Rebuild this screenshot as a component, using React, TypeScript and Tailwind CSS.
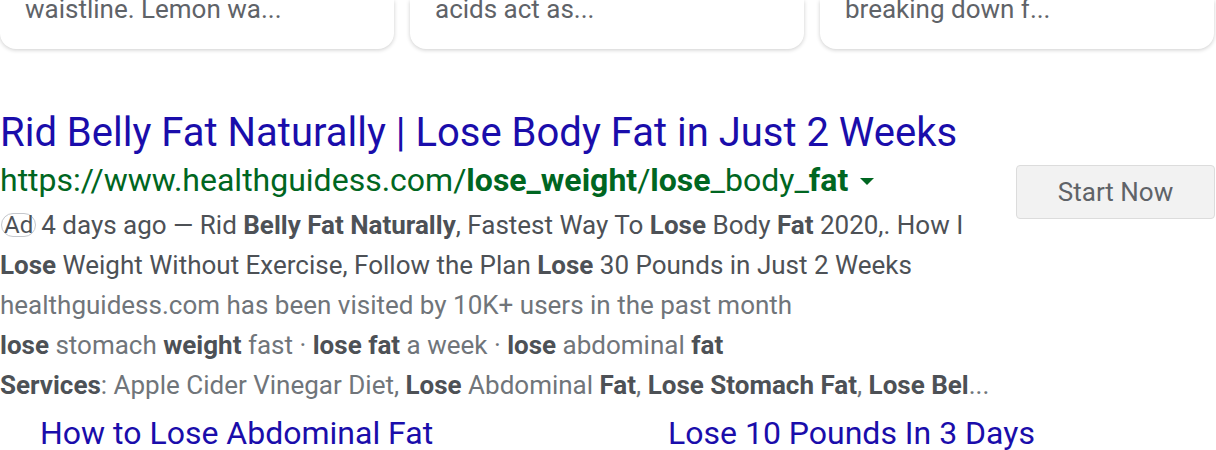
const Card = ({ text }: { text: string }) => (
  <div className="h-[49px] rounded-b-2xl bg-white shadow-[0_1px_4px_rgba(0,0,0,0.2)] flex items-end pb-[23px] overflow-hidden">
    <p className="px-[25px] text-[26px] leading-[34px] text-[#5f6368]">{text}</p>
  </div>
)

const B = ({ children }: { children: React.ReactNode }) => <b className="font-bold text-[#4d5156]">{children}</b>

export default function App() {
  return (
    <div className="w-[1216px] h-[450px] overflow-hidden bg-white font-['Roboto',sans-serif]">
      <div className="grid grid-cols-3 gap-4 pr-[2px]">
        <Card text="waistline. Lemon wa..." />
        <Card text="acids act as..." />
        <Card text="breaking down f..." />
      </div>

      <div className="flex mt-[60px]">
        <div className="flex-1">
          <a href="#" className="block text-[40px] leading-[48px] text-[#1a0dab]">
            Rid Belly Fat Naturally | Lose Body Fat in Just 2 Weeks
          </a>
          <div className="flex items-center mt-[3px] text-[32px] leading-[40px] text-[#006621]">
            <span>
              https://www.healthguidess.com/<b>lose_weight</b>/<b>lose</b>_body_<b>fat</b>
            </span>
            <span className="ml-[12px] mt-[2px] border-x-[7px] border-x-transparent border-t-[7px] border-t-[#006621]" />
          </div>
          <div className="mt-[5px] text-[26px] leading-[40px] text-[#4d5156]">
            <p>
              <span className="inline-block border border-[#c4c7cc] rounded-full px-[2px] text-[24px] leading-[22px] mr-[5px] ml-[1px] align-[1px]">Ad</span>
              4 days ago — Rid <B>Belly Fat Naturally</B>, Fastest Way To <B>Lose</B> Body <B>Fat</B> 2020,. How I
            </p>
            <p>
              <B>Lose</B> Weight Without Exercise, Follow the Plan <B>Lose</B> 30 Pounds in Just 2 Weeks
            </p>
            <p className="text-[#70757a]">healthguidess.com has been visited by 10K+ users in the past month</p>
            <p className="text-[#70757a]">
              <B>lose</B> stomach <B>weight</B> fast · <B>lose fat</B> a week · <B>lose</B> abdominal <B>fat</B>
            </p>
            <p className="text-[#70757a] whitespace-nowrap">
              <B>Services</B>: Apple Cider Vinegar Diet, <B>Lose</B> Abdominal <B>Fat</B>, <B>Lose Stomach Fat</B>, <B>Lose Bel</B>...
            </p>
          </div>
        </div>
        <div className="w-[200px] pt-[56px]">
          <button className="w-[199px] h-[54px] bg-[#f2f2f2] border border-[#dcdcdc] rounded-[4px] text-[26px] text-[#5f6368]">
            Start Now
          </button>
        </div>
      </div>

      <div className="flex mt-[8px] text-[32px] leading-[40px] text-[#1a0dab] whitespace-nowrap">
        <a href="#" className="ml-[40px] w-[628px]">How to Lose Abdominal Fat</a>
        <a href="#">Lose 10 Pounds In 3 Days</a>
      </div>
    </div>
  )
}
